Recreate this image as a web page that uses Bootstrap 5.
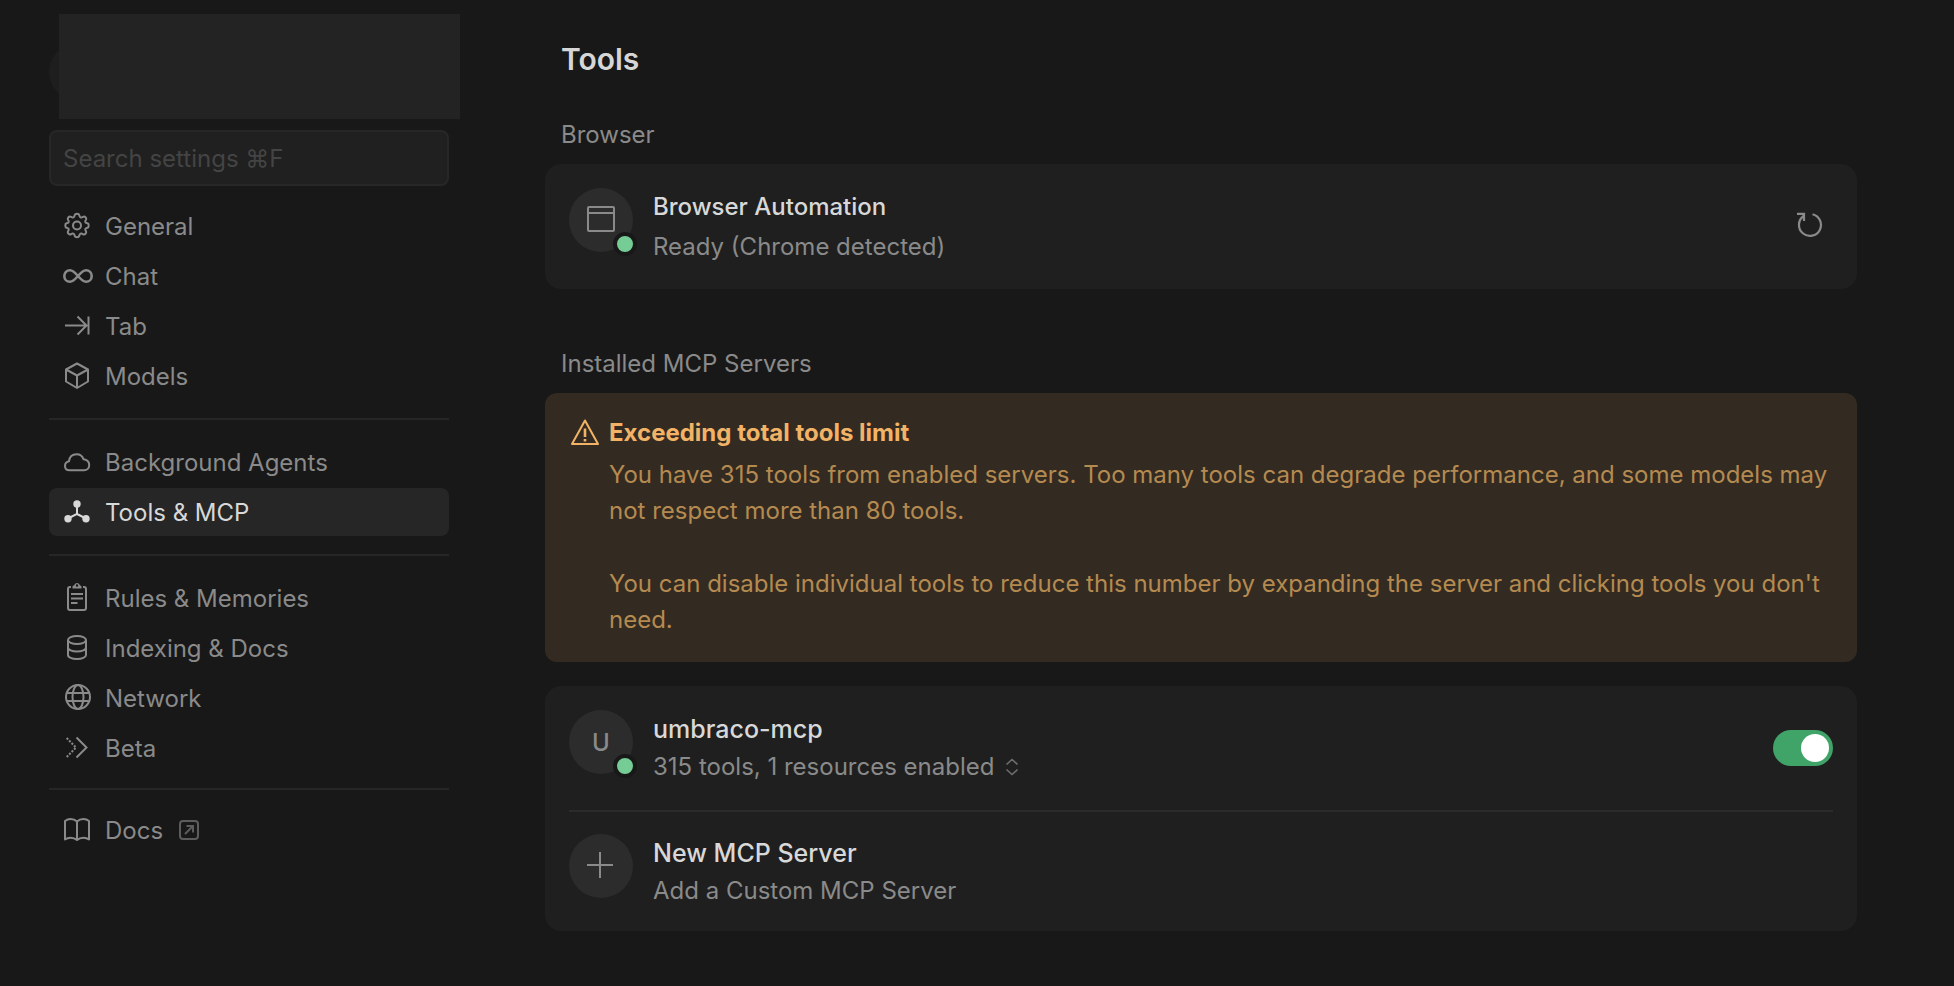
<!DOCTYPE html>
<html lang="en" data-bs-theme="dark">
<head>
<meta charset="utf-8">
<meta name="viewport" content="width=device-width, initial-scale=1">
<title>Tools settings</title>
<link href="https://cdn.jsdelivr.net/npm/bootstrap@5.3.0/dist/css/bootstrap.min.css" rel="stylesheet">
<style>
  body { background: #181818; color: #8a8a8a; font-family: Inter, "Noto Sans", sans-serif; font-size: 24px; line-height: 36px; }
  .shell { padding: 0 97px 40px 49px; gap: 96px; }
  .sidebar { width: 400px; padding-top: 14px; }
  .content { padding-top: 39px; }
  svg { fill: none; stroke: currentColor; stroke-width: 2; flex: none; }

  .profile { height: 105px; margin: 0 -11px 11px 10px; }
  .profile-panel { background: #232323; }
  .avatar { width: 56px; height: 56px; left: -10px; top: 30px; background: #1e1e1e; }

  .search { height: 56px; padding: 0 12px; font-size: 24px; color: #d6d6d6; background: #202020; border: 2px solid #272727; border-radius: 8px; }
  .search:focus { background: #202020; border-color: #3a3a3a; box-shadow: none; }
  .search::placeholder { color: #444; }

  .menu-item { height: 48px; padding: 0 12px; gap: 12px; color: #8a8a8a; border-radius: 8px; text-decoration: none; }
  .menu-item span { padding-top: 2px; }
  .menu-item:hover { color: #bbb; }
  .menu-item.active { background: #262626; color: #d8d8d8; }
  .menu-group { gap: 2px; }
  .rule { height: 2px; background: #262626; margin: 18px 0; }
  .rule-tight { margin: 16px 0; }
  .ext { color: #5c5c5c; margin-left: 4px; }

  .page-title { font-size: 30px; line-height: 40px; font-weight: 600; color: #d6d6d6; margin: 0 0 38px; padding-left: 16px; }
  .section { margin-bottom: 57px; }
  .section-label { font-size: 24px; line-height: 36px; font-weight: 400; color: #8a8a8a; margin: 0 0 11px; padding-left: 16px; }
  .panel { background: #1f1f1f; border-radius: 16px; padding: 0 24px; }
  .plain { background: none; border: 0; padding: 0; color: inherit; text-align: left; }
  .entry { gap: 20px; padding: 24px 0; }
  .server { padding-bottom: 25px; }
  .server + .server { border-top: 2px solid #2b2b2b; padding: 22px 0; }
  .entry-text { padding-top: 1px; }
  .disc { width: 64px; height: 64px; background: #2c2c2c; color: #8a8a8a; }
  .disc-text { font-weight: 500; padding-top: 2px; }
  .status { width: 24px; height: 24px; right: -4px; bottom: -4px; background: #75cc94; border: 4px solid #181818; }
  .entry-title { font-size: 24px; line-height: 36px; font-weight: 500; color: #d8d8d8; margin: 0 0 4px; }
  .server .entry-title { font-size: 25px; margin-bottom: 2px; }
  .expander { color: #6e6e6e; }

  .notice { background: #332b22; border: 0; border-radius: 12px; padding: 22px 24px 24px; gap: 8px; color: #b58a50; margin-bottom: 24px; }
  .notice h3 { font-size: 24px; line-height: 36px; font-weight: 700; margin: 0 0 6px; color: #f2b366; }
  .notice svg { color: #f2b366; }
  .notice p { margin: 0; }
  .notice p + p { margin-top: 37px; }
  .form-switch .toggle { width: 60px; height: 36px; margin: 0; border: 0; background-size: 36px 36px; }
  .form-switch .toggle:checked { background-color: #40a468; background-image: url("data:image/svg+xml,%3Csvg xmlns='http://www.w3.org/2000/svg' viewBox='0 0 36 36'%3E%3Ccircle cx='18' cy='18' r='14' fill='white'/%3E%3C/svg%3E"); }
</style>
</head>
<body>
<div class="shell d-flex align-items-start">
  <aside class="sidebar flex-shrink-0">
    <div class="profile position-relative">
      <div class="avatar position-absolute rounded-circle"></div>
      <div class="profile-panel position-relative h-100"></div>
    </div>
    <input type="search" class="search form-control mb-3" placeholder="Search settings ⌘F" aria-label="Search settings">
    <nav aria-label="Settings">
      <div class="menu-group d-flex flex-column">
        <a class="menu-item d-flex align-items-center" href="#"><svg width="32" height="32" viewBox="0 0 32 32"><circle cx="16" cy="15.500" r="4"/><path d="M13.700 5.200Q14 3.800 16 3.800T18.300 5.200C18.600 7.600 20.200 8.200 22 6.800Q23.400 6.200 24.500 7.200T25.100 9.600C23.500 11.400 24.200 13 26.500 13.300Q27.700 13.700 27.700 15.500T26.500 17.700C24.200 18 23.500 19.600 25.100 21.400Q25.600 22.700 24.500 23.800T22 24.300C20.200 22.900 18.600 23.500 18.300 25.800Q17.800 27.200 16 27.200T13.700 25.800C13.400 23.500 11.800 22.900 10 24.300Q8.600 24.800 7.500 23.800T6.900 21.400C8.500 19.600 7.800 18 5.500 17.700Q4.300 17.300 4.300 15.500T5.500 13.300C7.800 13 8.500 11.400 6.900 9.600Q6.400 8.300 7.500 7.200T10 6.800C11.800 8.200 13.400 7.600 13.700 5.200Z"/></svg><span>General</span></a>
        <a class="menu-item d-flex align-items-center" href="#"><svg width="32" height="32" viewBox="0 0 32 32"><path stroke-width="2.600" d="M17 16C14 12.500 12 10.200 9 10.200C5.800 10.200 3.300 12.700 3.300 16S5.800 21.800 9 21.800C12 21.800 14 19.500 17 16S22 10.200 25 10.200C28.200 10.200 30.700 12.700 30.700 16S28.200 21.800 25 21.800C22 21.800 20 19.500 17 16Z"/></svg><span>Chat</span></a>
        <a class="menu-item d-flex align-items-center" href="#"><svg width="32" height="32" viewBox="0 0 32 32"><path d="M4 15.500H25.500M16.500 6.500L25.500 15.500L16.500 24.500M27.500 6.500V24.500"/></svg><span>Tab</span></a>
        <a class="menu-item d-flex align-items-center" href="#"><svg width="32" height="32" viewBox="0 0 32 32"><path stroke-linejoin="round" d="M16 3.500L27 9.500V21.500L16 28L5 21.500V9.500ZM5 9.500L16 15.500L27 9.500M16 15.500V28"/></svg><span>Models</span></a>
      </div>
      <div class="rule"></div>
      <div class="menu-group d-flex flex-column">
        <a class="menu-item d-flex align-items-center" href="#"><svg width="32" height="32" viewBox="0 0 32 32"><path stroke-linejoin="round" d="M8.500 24.300C5.500 24.300 4 22.300 4 20C4 17.500 5.500 15.800 8 15.300C8.500 11 11.500 8.300 15.500 8.300C19 8.300 21.500 10 22.500 13.300C26 13.800 28.200 16 28.200 19C28.200 22.200 26 24.300 23 24.300Z"/></svg><span>Background Agents</span></a>
        <a class="menu-item active d-flex align-items-center" href="#" aria-current="page"><svg width="32" height="32" viewBox="0 0 32 32"><path d="M16 8V18L7 22.500M16 18L25 22.500"/><g fill="currentColor" stroke="none"><circle cx="16" cy="8" r="3.700"/><circle cx="7" cy="22.700" r="3.700"/><circle cx="25" cy="22.700" r="3.700"/></g></svg><span>Tools &amp; MCP</span></a>
      </div>
      <div class="rule"></div>
      <div class="menu-group d-flex flex-column">
        <a class="menu-item d-flex align-items-center" href="#"><svg width="32" height="32" viewBox="0 0 32 32"><path d="M10 5H9Q7 5 7 7V26Q7 28 9 28H23Q25 28 25 26V7Q25 5 23 5H22M10 12H22M10 16.500H22M10 21H16.500"/><path fill="currentColor" stroke="none" fill-rule="evenodd" d="M11.500 6.500V4.500Q11.500 3.500 13 3.500Q13.500 1 16 1T19 3.500Q20.500 3.500 20.500 4.500V6.500ZM16 2.300A1.200 1.200 0 1 0 16 4.700A1.200 1.200 0 1 0 16 2.300Z"/></svg><span>Rules &amp; Memories</span></a>
        <a class="menu-item d-flex align-items-center" href="#"><svg width="32" height="32" viewBox="0 0 32 32"><ellipse cx="16" cy="8" rx="9" ry="4"/><path d="M7 8V23C7 25.400 11 27 16 27S25 25.400 25 23V8M7 15.500C7 17.900 11 19.500 16 19.500S25 17.900 25 15.500"/></svg><span>Indexing &amp; Docs</span></a>
        <a class="menu-item d-flex align-items-center" href="#"><svg width="32" height="32" viewBox="0 0 32 32"><circle cx="17" cy="15" r="12"/><ellipse cx="17" cy="15" rx="5.500" ry="12"/><path d="M5.800 11H28.200M5.800 19H28.200"/></svg><span>Network</span></a>
        <a class="menu-item d-flex align-items-center" href="#"><svg width="32" height="32" viewBox="0 0 32 32"><path d="M15.500 5.500L25.500 15.500L15.500 25.500"/><path stroke-dasharray="2 1.500" d="M5.700 6L15 15.500L5.700 25"/></svg><span>Beta</span></a>
      </div>
      <div class="rule rule-tight"></div>
      <a class="menu-item d-flex align-items-center" href="#"><svg width="32" height="32" viewBox="0 0 32 32"><path stroke-linejoin="round" d="M16 7.500C14 5.500 11.500 5 9.500 5C7 5 5.500 5.800 4 7V25.500C5.500 24.300 7 23.700 9.500 23.700S14 24.200 16 26C18 24.200 20 23.700 22.500 23.700S26.500 24.300 28 25.500V7C26.500 5.800 25 5 22.500 5C20.500 5 18 5.500 16 7.500ZM16 7.500V26"/></svg><span>Docs</span><svg class="ext" width="20" height="20" viewBox="0 0 20 20"><rect x="1" y="1" width="18" height="18" rx="3"/><path d="M6 14L13.500 6.500M7.500 6H14V12.500"/></svg></a>
    </nav>
  </aside>

  <main class="content flex-grow-1">
    <h1 class="page-title">Tools</h1>

    <section class="section">
      <h2 class="section-label">Browser</h2>
      <div class="panel">
        <div class="entry d-flex align-items-center">
          <div class="disc position-relative rounded-circle d-flex align-items-center justify-content-center flex-shrink-0 align-self-start">
            <svg width="28" height="28" viewBox="0 0 28 28"><rect x="1" y="1" width="26" height="24" rx="1"/><path d="M1 7H27"/></svg>
            <span class="status position-absolute rounded-circle"></span>
          </div>
          <div class="entry-text flex-grow-1">
            <h3 class="entry-title">Browser Automation</h3>
            <div>Ready (Chrome detected)</div>
          </div>
          <button type="button" class="plain d-flex" aria-label="Refresh"><svg width="48" height="32" viewBox="0 0 48 32"><path stroke-width="2.200" d="M27.500 3.200A11 11 0 1 1 18.500 5M12 2.800H19V10"/></svg></button>
        </div>
      </div>
    </section>

    <section>
      <h2 class="section-label">Installed MCP Servers</h2>
      <div class="notice alert d-flex" role="alert">
        <svg width="32" height="36" viewBox="0 0 32 36"><path stroke-linejoin="round" d="M16 5.500L29 29H3Z"/><path stroke-width="2.600" d="M16 13.500V22M16 24V26.500"/></svg>
        <div>
          <h3>Exceeding total tools limit</h3>
          <p>You have 315 tools from enabled servers. Too many tools can degrade performance, and some models may not respect more than 80 tools.</p>
          <p>You can disable individual tools to reduce this number by expanding the server and clicking tools you don't need.</p>
        </div>
      </div>

      <div class="panel">
        <div class="entry server d-flex align-items-center">
          <div class="disc disc-text position-relative rounded-circle d-flex align-items-center justify-content-center flex-shrink-0 align-self-start">U
            <span class="status position-absolute rounded-circle"></span>
          </div>
          <div class="entry-text flex-grow-1">
            <h3 class="entry-title"><label for="umbraco">umbraco-mcp</label></h3>
            <button type="button" class="plain d-flex align-items-center">315 tools, 1 resources enabled<svg class="expander ms-2" width="20" height="20" viewBox="0 0 20 20"><path stroke-width="1.600" d="M4.500 7.500L10 2.500L15.500 7.500M4.500 12.500L10 17.500L15.500 12.500"/></svg></button>
          </div>
          <div class="form-check form-switch m-0 p-0 d-flex"><input class="toggle form-check-input" type="checkbox" role="switch" id="umbraco" checked></div>
        </div>
        <button type="button" class="plain entry server d-flex align-items-center w-100">
          <span class="disc rounded-circle d-flex align-items-center justify-content-center flex-shrink-0 align-self-start"><svg width="32" height="32" viewBox="0 0 32 32"><path d="M2 15H28M15 2V28"/></svg></span>
          <span class="entry-text">
            <span class="entry-title d-block">New MCP Server</span>
            <span class="d-block">Add a Custom MCP Server</span>
          </span>
        </button>
      </div>
    </section>
  </main>
</div>
<script src="https://cdn.jsdelivr.net/npm/bootstrap@5.3.0/dist/js/bootstrap.bundle.min.js"></script>
</body>
</html>
